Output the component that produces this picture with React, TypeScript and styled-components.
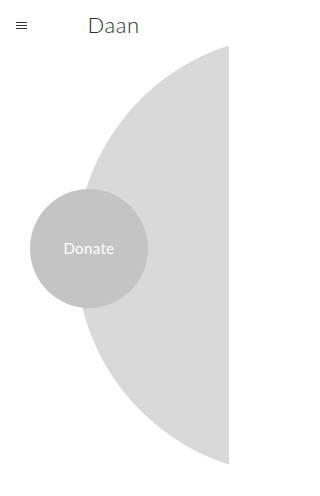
import React from "react";
import styled, { createGlobalStyle } from "styled-components";

const Global = createGlobalStyle`
  html, body { margin: 0; padding: 0; background: #ffffff; }
  body { font-family: "Lato", "Open Sans", sans-serif; overflow: hidden; }
  * { box-sizing: border-box; }
`;

const Page = styled.div`
  position: relative;
  width: 229px;
  height: 496px;
  overflow: hidden;
  background: #ffffff;
`;

const BigCircle = styled.div`
  position: absolute;
  left: 76px;
  top: 35px;
  width: 440px;
  height: 440px;
  border-radius: 50%;
  background: #d9d9d9;
  z-index: 0;
`;

const Header = styled.header`
  position: relative;
  z-index: 1;
  display: grid;
  grid-template-columns: 11px 1fr 11px;
  align-items: center;
  height: 50px;
  padding: 0 16px;
`;

const MenuButton = styled.button`
  display: flex;
  flex-direction: column;
  gap: 2px;
  width: 11px;
  padding: 0;
  border: 0;
  background: transparent;
`;

const MenuLine = styled.span`
  display: block;
  width: 11px;
  height: 1px;
  background: #333333;
`;

const Title = styled.h1`
  margin: 0;
  text-align: center;
  font-family: "Lato", sans-serif;
  font-weight: 300;
  font-size: 22px;
  letter-spacing: 0.6px;
  color: #2e2e2e;
  line-height: 50px;
  transform: translateX(-1px);
`;

const Main = styled.main`
  position: relative;
  z-index: 1;
  padding: 139px 0 0 30px;
`;

const DonateButton = styled.button`
  display: flex;
  align-items: center;
  justify-content: center;
  width: 118px;
  height: 119px;
  border-radius: 50%;
  border: 0;
  padding: 0 0 2px;
  background: #c4c4c4;
  color: #ffffff;
  font-family: "Lato", sans-serif;
  font-weight: 400;
  font-size: 15px;
  letter-spacing: 0.4px;
`;

export default function App() {
  return (
    <>
      <Global />
      <Page>
        <BigCircle />
        <Header>
          <MenuButton aria-label="Menu">
            <MenuLine />
            <MenuLine />
            <MenuLine />
          </MenuButton>
          <Title>Daan</Title>
          <span />
        </Header>
        <Main>
          <DonateButton>Donate</DonateButton>
        </Main>
      </Page>
    </>
  );
}
